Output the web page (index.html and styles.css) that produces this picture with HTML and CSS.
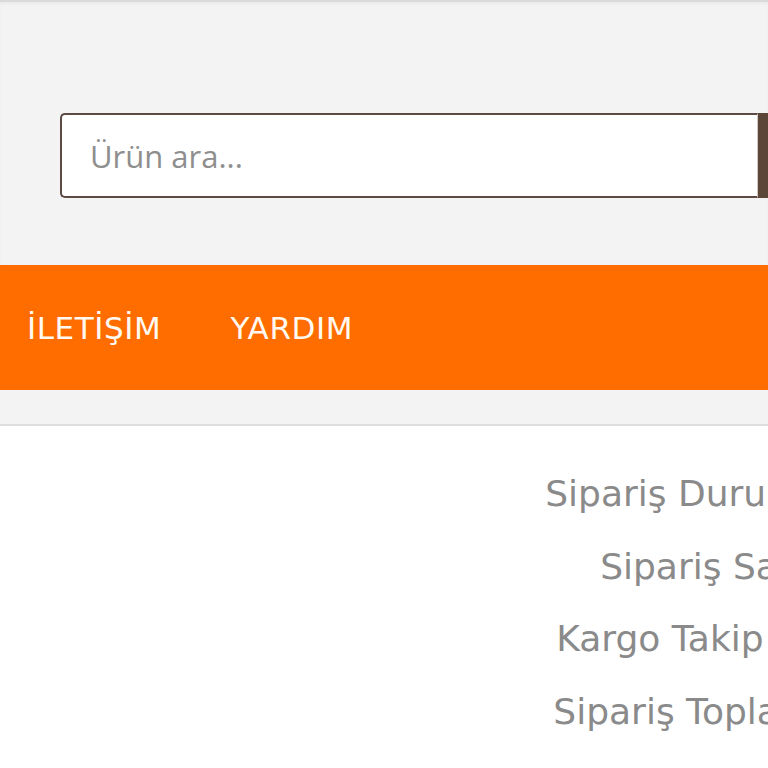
FILE: index.html
```html
<!DOCTYPE html>
<html lang="tr">
<head>
<meta charset="utf-8">
<title>Mağaza</title>
<link rel="stylesheet" href="styles.css">
</head>
<body>
<div class="page">
  <header class="top">
    <form class="search">
      <input class="search-input" type="text" placeholder="Ürün ara...">
      <button class="search-btn" type="button" aria-label="Ara"></button>
    </form>
  </header>
  <nav class="menu">
    <a class="menu-link" href="#">İLETİŞİM</a>
    <a class="menu-link" href="#">YARDIM</a>
  </nav>
  <div class="strip"></div>
  <main class="content">
    <ul class="info">
      <li class="info-row">Sipariş Durumu</li>
      <li class="info-row">Sipariş Saati</li>
      <li class="info-row">Kargo Takip No</li>
      <li class="info-row">Sipariş Toplamı</li>
    </ul>
  </main>
</div>
</body>
</html>
```

FILE: styles.css
```css
html, body {
  margin: 0;
  padding: 0;
  overflow: hidden;
  background: #ffffff;
}

.page {
  width: 768px;
  height: 768px;
  overflow: hidden;
}

.top {
  background: #f3f3f3;
  border-top: 2px solid #dadada;
  box-shadow: inset 0 2px 3px -1px #e6e6e6;
  padding: 111px 0 67px 60px;
}

.search {
  display: flex;
  width: 860px;
  height: 85px;
  margin: 0;
}

.search-input {
  box-sizing: border-box;
  width: 698px;
  height: 85px;
  border: 2px solid #5b4b44;
  border-right: 1px solid #cfc9c5;
  border-radius: 5px 0 0 5px;
  padding: 0 0 0 28px;
  font-family: "Open Sans", sans-serif;
  font-size: 31px;
  color: #333;
  background: #fff;
  outline: none;
}

.search-input::placeholder {
  color: #8e8e8e;
}

.search-btn {
  flex: 1;
  height: 85px;
  border: 0;
  background: #5c4638;
}

.menu {
  background: #ff6d00;
  height: 125px;
  display: flex;
  align-items: center;
  gap: 69px;
  padding-left: 27px;
}

.menu-link {
  font-family: "DejaVu Sans", sans-serif;
  font-size: 31px;
  color: #fff9f2;
  text-decoration: none;
  letter-spacing: 0.6px;
}

.strip {
  background: #f3f3f3;
  height: 34px;
  border-bottom: 2px solid #dddddd;
}

.content {
  padding-top: 32px;
}

.info {
  list-style: none;
  margin: 0;
  padding: 0;
  width: 824px;
  text-align: right;
}

.info-row {
  font-family: "DejaVu Sans", sans-serif;
  font-size: 36px;
  line-height: 72.5px;
  color: #8a8a8a;
}
```
